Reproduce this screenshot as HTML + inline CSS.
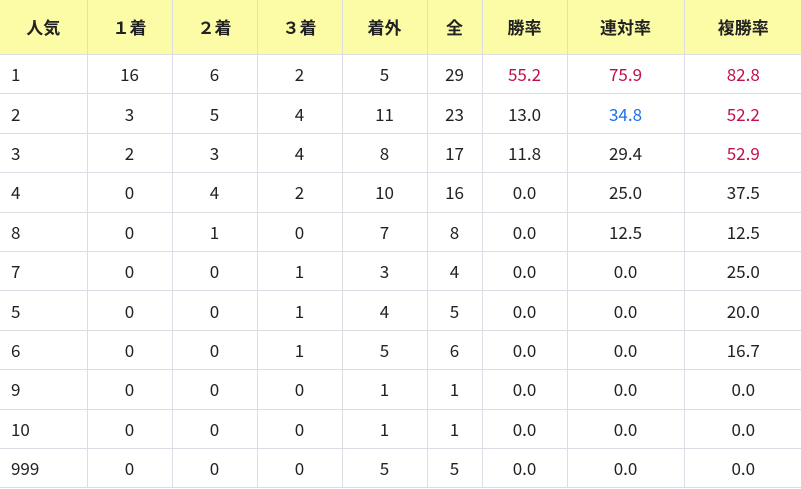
<!DOCTYPE html>
<html><head><meta charset="utf-8"><style>
body{margin:0;background:#fff;}
table{border-collapse:collapse;table-layout:fixed;width:802px;font-family:"Noto Sans CJK JP",sans-serif;font-size:17px;line-height:20px;color:#222;}
th{background:#fcfca6;height:54px;font-weight:bold;border-right:1px solid #dcdce4;border-bottom:1px solid #dcdce4;padding:0;text-align:center;}
td{height:38.4px;border-right:1px solid #dcdce4;border-bottom:1px solid #dcdce4;text-align:center;padding:0;}
td:first-child{text-align:left;padding-left:11px;}
th:last-child,td:last-child{border-right:none;}
.r{color:#c0104a}.b{color:#1a73e8}
</style></head><body>
<table>
<colgroup><col style="width:87px"><col style="width:85px"><col style="width:85px"><col style="width:85px"><col style="width:85px"><col style="width:55px"><col style="width:85px"><col style="width:117px"><col style="width:118px"></colgroup>
<tr><th>人気</th><th>１着</th><th>２着</th><th>３着</th><th>着外</th><th>全</th><th>勝率</th><th>連対率</th><th>複勝率</th></tr>
<tr><td>1</td><td>16</td><td>6</td><td>2</td><td>5</td><td>29</td><td class="r">55.2</td><td class="r">75.9</td><td class="r">82.8</td></tr>
<tr><td>2</td><td>3</td><td>5</td><td>4</td><td>11</td><td>23</td><td>13.0</td><td class="b">34.8</td><td class="r">52.2</td></tr>
<tr><td>3</td><td>2</td><td>3</td><td>4</td><td>8</td><td>17</td><td>11.8</td><td>29.4</td><td class="r">52.9</td></tr>
<tr><td>4</td><td>0</td><td>4</td><td>2</td><td>10</td><td>16</td><td>0.0</td><td>25.0</td><td>37.5</td></tr>
<tr><td>8</td><td>0</td><td>1</td><td>0</td><td>7</td><td>8</td><td>0.0</td><td>12.5</td><td>12.5</td></tr>
<tr><td>7</td><td>0</td><td>0</td><td>1</td><td>3</td><td>4</td><td>0.0</td><td>0.0</td><td>25.0</td></tr>
<tr><td>5</td><td>0</td><td>0</td><td>1</td><td>4</td><td>5</td><td>0.0</td><td>0.0</td><td>20.0</td></tr>
<tr><td>6</td><td>0</td><td>0</td><td>1</td><td>5</td><td>6</td><td>0.0</td><td>0.0</td><td>16.7</td></tr>
<tr><td>9</td><td>0</td><td>0</td><td>0</td><td>1</td><td>1</td><td>0.0</td><td>0.0</td><td>0.0</td></tr>
<tr><td>10</td><td>0</td><td>0</td><td>0</td><td>1</td><td>1</td><td>0.0</td><td>0.0</td><td>0.0</td></tr>
<tr><td>999</td><td>0</td><td>0</td><td>0</td><td>5</td><td>5</td><td>0.0</td><td>0.0</td><td>0.0</td></tr>
</table>
</body></html>
